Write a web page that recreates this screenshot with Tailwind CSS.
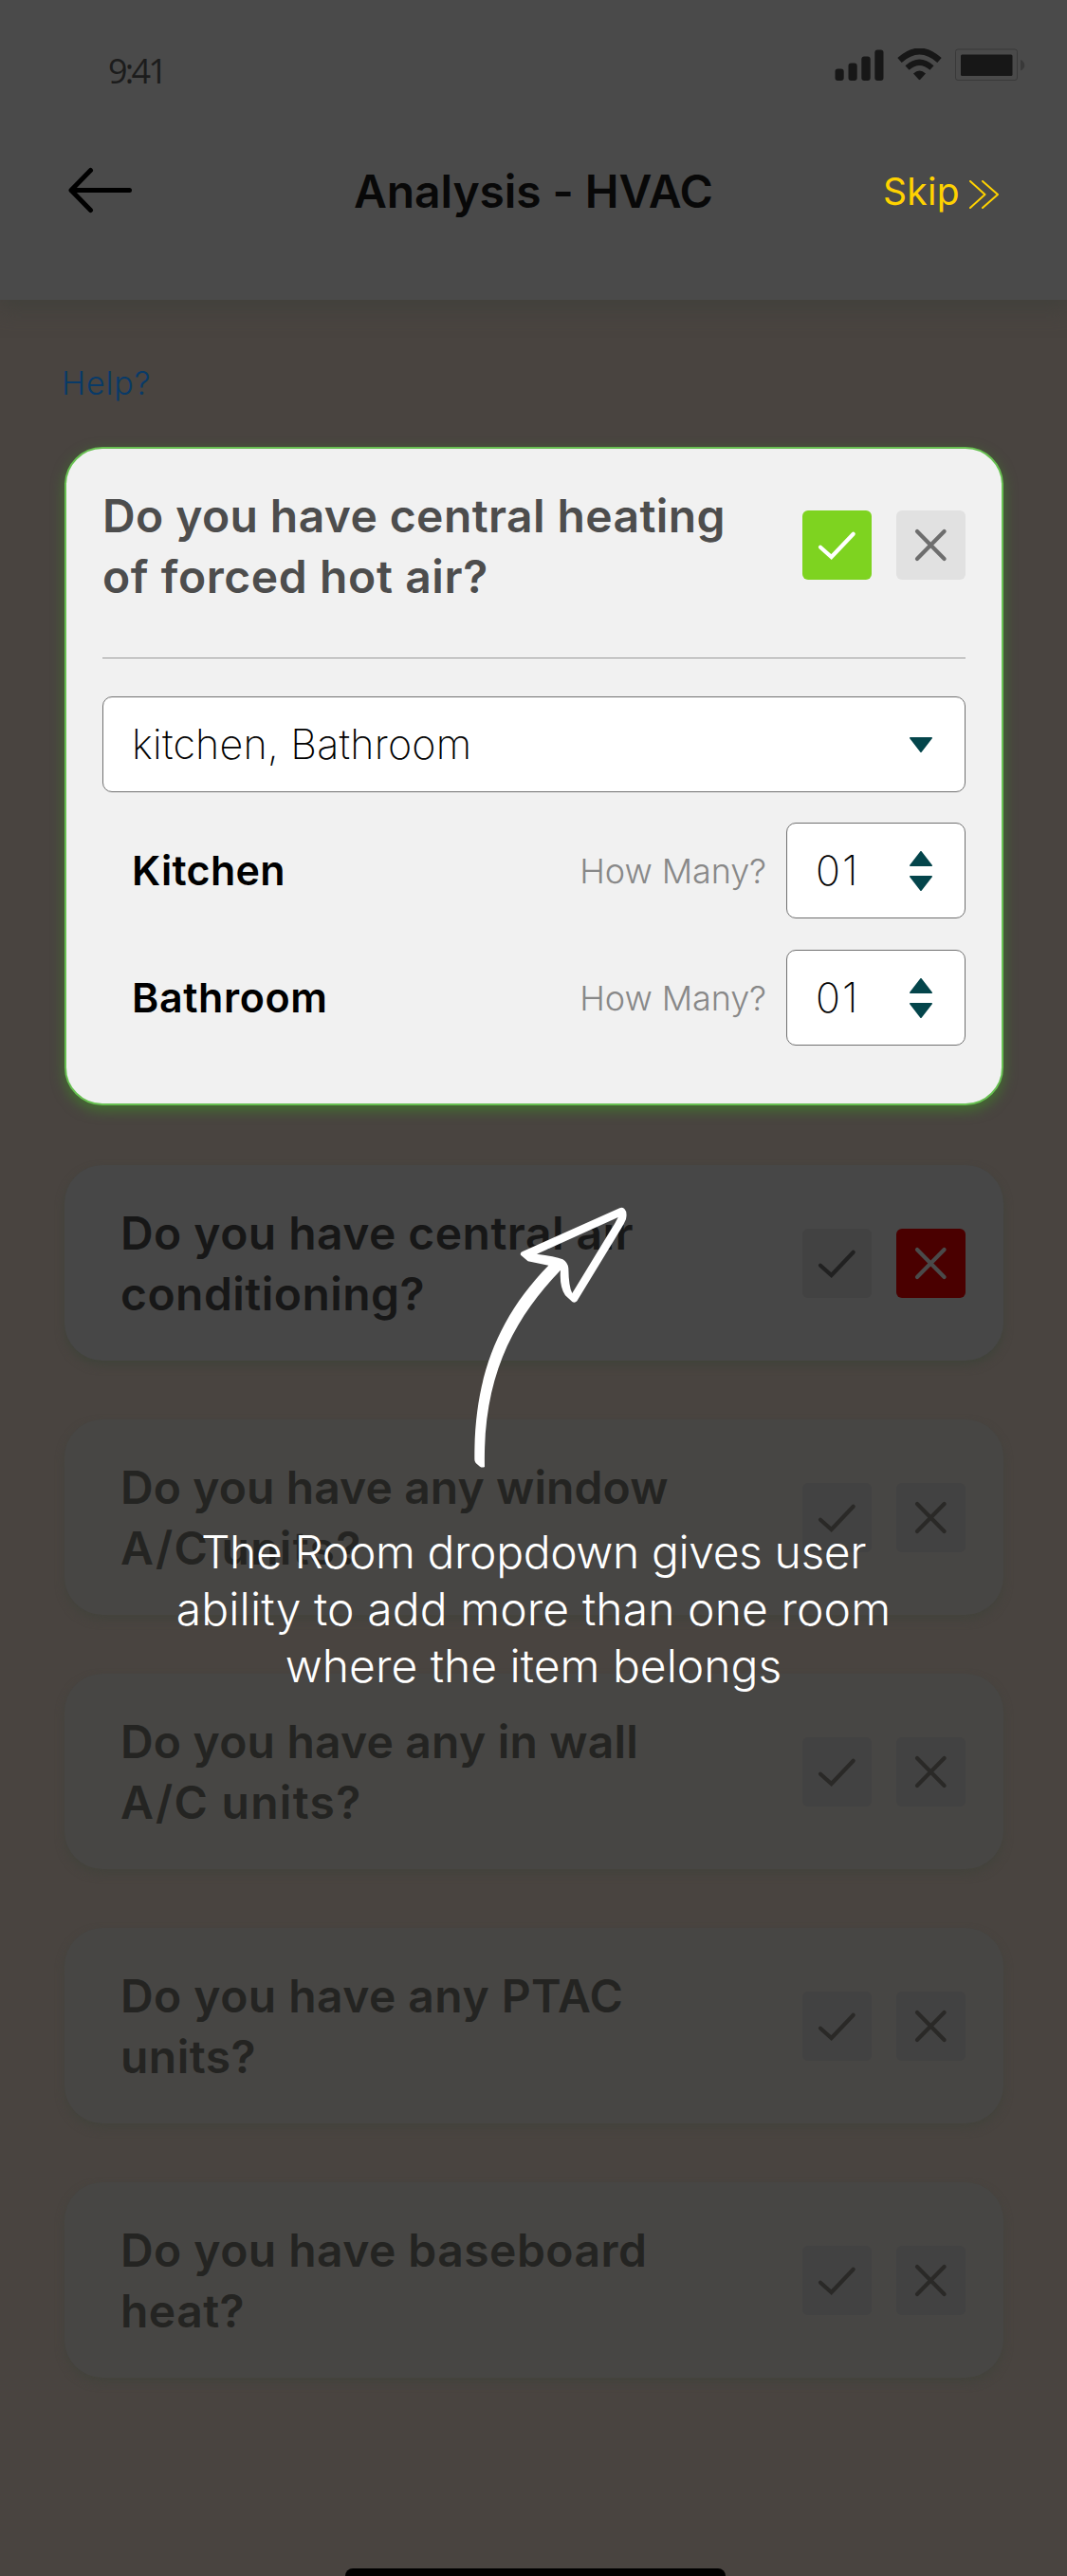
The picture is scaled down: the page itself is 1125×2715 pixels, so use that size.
<!DOCTYPE html>
<html lang="en">
<head>
<meta charset="utf-8">
<title>Analysis - HVAC</title>
<script src="https://cdn.jsdelivr.net/npm/@tailwindcss/browser@4"></script>
</head>
<body class="bg-[#494440]">
<svg class="hidden">
  <symbol id="check" viewBox="0 0 73 73"><path d="M19 38.7 30.6 49 53.7 24.7" fill="none" stroke="currentColor" stroke-width="4.2" stroke-linecap="round"/></symbol>
  <symbol id="cross" viewBox="0 0 73 73"><path d="M22 22 50.6 51M50.6 22 22 51" fill="none" stroke="currentColor" stroke-width="4.2" stroke-linecap="round"/></symbol>
  <symbol id="up" viewBox="0 0 24 16"><path d="M12 0.800 23.200 15.200H0.800Z" fill="#04454b" stroke="#04454b" stroke-width="1.6" stroke-linejoin="round"/></symbol>
  <symbol id="down" viewBox="0 0 24 16"><path d="M12 15.200 23.200 0.800H0.800Z" fill="#04454b" stroke="#04454b" stroke-width="1.6" stroke-linejoin="round"/></symbol>
</svg>
<div class="relative flex h-[2715px] w-[1125px] flex-col overflow-hidden font-['Inter',sans-serif]">

  <header class="h-[316px] shrink-0 bg-[#4a4a4a] shadow-[0_10px_20px_#42413c]">
    <div class="flex h-[104px] items-center justify-between pt-[44px] pr-[44px] pl-[114px]">
      <span class="pt-[2px] font-['Open_Sans',sans-serif] text-[36px] leading-[60px] font-normal tracking-[-2.800px] text-[#1c1c1c]">9:41</span>
      <svg class="mb-[12px]" width="201" height="34" viewBox="0 0 201 34" fill="#171717">
        <rect x="0.5" y="21.5" width="9.2" height="12.5" rx="3"/>
        <rect x="14.5" y="15.5" width="9.2" height="18.5" rx="3"/>
        <rect x="28.3" y="8.5" width="9.4" height="25.5" rx="3"/>
        <rect x="42.3" y="1.5" width="9.2" height="32.5" rx="3"/>
        <g fill="none" stroke="#171717">
          <path d="M68.5 12.5Q89.500-6.500 110.500 12.500" stroke-width="6.600"/>
          <path d="M76.500 20.500Q89.500 9 102.500 20.500" stroke-width="6.200"/>
        </g>
        <path d="M83 26.500Q89.500 20.500 96 26.500L90.300 32.800Q89.500 33.500 88.700 32.800Z"/>
        <rect x="127.500" y="1" width="65" height="32.500" rx="2.500" fill="none" stroke="#393939"/>
        <rect x="133" y="6.500" width="54.500" height="22.500" rx="1.500"/>
        <path d="M196 12Q200.300 14 200.300 17.800T196 23.500Z" fill="#393939"/>
      </svg>
    </div>
    <div class="grid h-[195px] grid-cols-[373px_558px_auto] items-center">
      <svg class="mb-[3px] ml-[70px]" width="72" height="50" viewBox="0 0 72 50" fill="none" stroke="#000" stroke-width="5" stroke-linecap="round" stroke-linejoin="round"><path d="M25.500 4.500 5 25.500 25.500 46.500M5 25.500H66.500"/></svg>
      <h1 class="text-[48px] leading-[64px] font-semibold tracking-[-0.100px] text-[#080808]">Analysis - HVAC</h1>
      <div class="flex items-center gap-[9px] text-[#ffd200]">
        <span class="text-[39px] leading-[50px] font-normal tracking-[0.300px]">Skip</span>
        <svg class="mt-[7px]" width="33" height="30" viewBox="0 0 33 30" fill="none" stroke="currentColor" stroke-width="2" stroke-linecap="round" stroke-linejoin="round"><path d="M2 1 17.500 15 2 29M15 1 31 15 15 29"/></svg>
      </div>
    </div>
  </header>

  <main class="flex flex-col px-[68px] pt-[68px]">
    <a class="-ml-[3px] text-[34px] leading-[40px] font-[350] tracking-[0.800px] text-[#083a68]">Help?</a>

    <section class="mt-[47px] h-[694px] w-[990px] rounded-[40px] border-2 border-[#68c052] bg-[#f1f1f1] px-[38px] pt-[38.500px] shadow-[0_5px_14px_#43732f]">
      <div class="w-[910px]">
        <div class="flex h-[128px] items-center justify-between">
          <h2 class="text-[48px] leading-[64px] font-semibold tracking-[0.400px] whitespace-nowrap text-[#4d4d4d]">Do you have central heating<br><span class="tracking-[0.600px]">of forced hot air?</span></h2>
          <div class="mb-[2px] flex gap-[26px]">
            <button class="size-[73px] rounded-[6px] bg-[#7ed320] text-white"><svg class="size-full"><use href="#check"/></svg></button>
            <button class="size-[73px] rounded-[6px] bg-[#e1e1e1] text-[#6e6e6e]"><svg class="size-full"><use href="#cross"/></svg></button>
          </div>
        </div>
        <hr class="mt-[53.500px] border-t border-[#9a9a9a]">
        <div class="mt-[40px] flex h-[101px] items-center justify-between rounded-[10px] border border-[#707070] bg-white pr-[34px] pl-[30px]">
          <span class="text-[43px] leading-none font-[250] tracking-[0.200px] text-black">kitchen, Bathroom</span>
          <svg class="h-[16px] w-[24px]"><use href="#down"/></svg>
        </div>
        <div class="mt-[32px] flex h-[101px] items-center">
          <span class="ml-[31px] flex-1 text-[43px] leading-none font-semibold tracking-[0.300px] text-black">Kitchen</span>
          <span class="mr-[21px] text-[36px] leading-none font-[350] tracking-[-0.100px] text-[#888888]">How Many?</span>
          <div class="flex h-full w-[189px] items-center justify-between rounded-[10px] border border-[#707070] bg-white pr-[34px] pl-[30px]">
            <span class="text-[43px] leading-none font-[250] tracking-[2px] text-black">01</span>
            <div class="flex flex-col gap-[10px]"><svg class="h-[16px] w-[24px]"><use href="#up"/></svg><svg class="h-[16px] w-[24px]"><use href="#down"/></svg></div>
          </div>
        </div>
        <div class="mt-[33px] flex h-[101px] items-center">
          <span class="ml-[31px] flex-1 text-[43px] leading-none font-semibold tracking-[0.600px] text-black">Bathroom</span>
          <span class="mr-[21px] text-[36px] leading-none font-[350] tracking-[-0.100px] text-[#888888]">How Many?</span>
          <div class="flex h-full w-[189px] items-center justify-between rounded-[10px] border border-[#707070] bg-white pr-[34px] pl-[30px]">
            <span class="text-[43px] leading-none font-[250] tracking-[2px] text-black">01</span>
            <div class="flex flex-col gap-[10px]"><svg class="h-[16px] w-[24px]"><use href="#up"/></svg><svg class="h-[16px] w-[24px]"><use href="#down"/></svg></div>
          </div>
        </div>
      </div>
    </section>

    <div class="mt-[63px] flex w-[990px] flex-col gap-[62px] text-[48px] leading-[64px] font-semibold tracking-[0.450px] whitespace-nowrap">
      <section class="flex h-[206px] items-center justify-between rounded-[40px] bg-[#474747] pr-[40px] pl-[59px] text-[#171717] shadow-[0_5px_10px_#40433a]">
        <h2 class="pt-[2px]">Do you have central air<br>conditioning?</h2>
        <div class="flex gap-[26px]">
          <button class="size-[73px] rounded-[6px] bg-[#424242] text-[#212121]"><svg class="size-full"><use href="#check"/></svg></button>
          <button class="size-[73px] rounded-[6px] bg-[#4a0000] text-[#4a4a4a]"><svg class="size-full"><use href="#cross"/></svg></button>
        </div>
      </section>
      <section class="flex h-[206px] items-center justify-between rounded-[40px] bg-[#474644] pr-[40px] pl-[59px] text-[#242422] shadow-[0_5px_10px_#43433c]">
        <h2 class="pt-[2px]"><span class="tracking-[0.100px]">Do you have any window</span><br><span class="tracking-[1.300px]">A/C units?</span></h2>
        <div class="flex gap-[26px] text-[#2a2927]">
          <button class="size-[73px] rounded-[6px] bg-[#424242]"><svg class="size-full"><use href="#check"/></svg></button>
          <button class="size-[73px] rounded-[6px] bg-[#424242]"><svg class="size-full"><use href="#cross"/></svg></button>
        </div>
      </section>
      <section class="flex h-[206px] items-center justify-between rounded-[40px] bg-[#474644] pr-[40px] pl-[59px] text-[#242422] shadow-[0_5px_10px_#43433c]">
        <h2 class="pt-[2px]"><span class="tracking-[0.200px]">Do you have any in wall</span><br><span class="tracking-[1.300px]">A/C units?</span></h2>
        <div class="flex gap-[26px] text-[#2a2927]">
          <button class="size-[73px] rounded-[6px] bg-[#424242]"><svg class="size-full"><use href="#check"/></svg></button>
          <button class="size-[73px] rounded-[6px] bg-[#424242]"><svg class="size-full"><use href="#cross"/></svg></button>
        </div>
      </section>
      <section class="flex h-[206px] items-center justify-between rounded-[40px] bg-[#474644] pr-[40px] pl-[59px] text-[#242422] shadow-[0_5px_10px_#43433c]">
        <h2 class="pt-[2px]">Do you have any PTAC<br>units?</h2>
        <div class="flex gap-[26px] text-[#2a2927]">
          <button class="size-[73px] rounded-[6px] bg-[#424242]"><svg class="size-full"><use href="#check"/></svg></button>
          <button class="size-[73px] rounded-[6px] bg-[#424242]"><svg class="size-full"><use href="#cross"/></svg></button>
        </div>
      </section>
      <section class="flex h-[206px] items-center justify-between rounded-[40px] bg-[#474644] pr-[40px] pl-[59px] text-[#242422] shadow-[0_5px_10px_#43433c]">
        <h2 class="pt-[2px]">Do you have baseboard<br>heat?</h2>
        <div class="flex gap-[26px] text-[#2a2927]">
          <button class="size-[73px] rounded-[6px] bg-[#424242]"><svg class="size-full"><use href="#check"/></svg></button>
          <button class="size-[73px] rounded-[6px] bg-[#424242]"><svg class="size-full"><use href="#cross"/></svg></button>
        </div>
      </section>
    </div>
  </main>

  <div class="mt-[201px] ml-[364px] h-[16px] w-[401px] shrink-0 rounded-[8px] bg-black"></div>

  <!-- Coach mark: hand-drawn arrow and hint -->
  <svg class="absolute top-[1260px] left-[485px]" width="185" height="295" viewBox="0 0 555 885" fill="#fff" fill-rule="evenodd">
    <path d="M46 835C44 600 105 400 280 221L215 208L192 188Q189 180 198 177L505 40Q512 35 520 42Q530 52 525 75Q519 90 508 107L370 334Q363 341 355 336L333 316Q314 288 318 236C170 390 72 570 78 858Q70 862 63 857L50 846Q46 842 46 835ZM243 185Q300 192 325 202Q341 212 343 230Q344 290 355 309L478 107Q490 90 500 69Z"/>
  </svg>
  <p class="absolute top-[1606px] left-0 w-full text-center text-[48px] leading-[60px] font-light text-white">
    <span class="tracking-[-0.400px]">The Room dropdown gives user</span><br>
    <span class="tracking-[0.100px]">ability to add more than one room</span><br>
    <span>where the item belongs</span>
  </p>
</div>
</body>
</html>
